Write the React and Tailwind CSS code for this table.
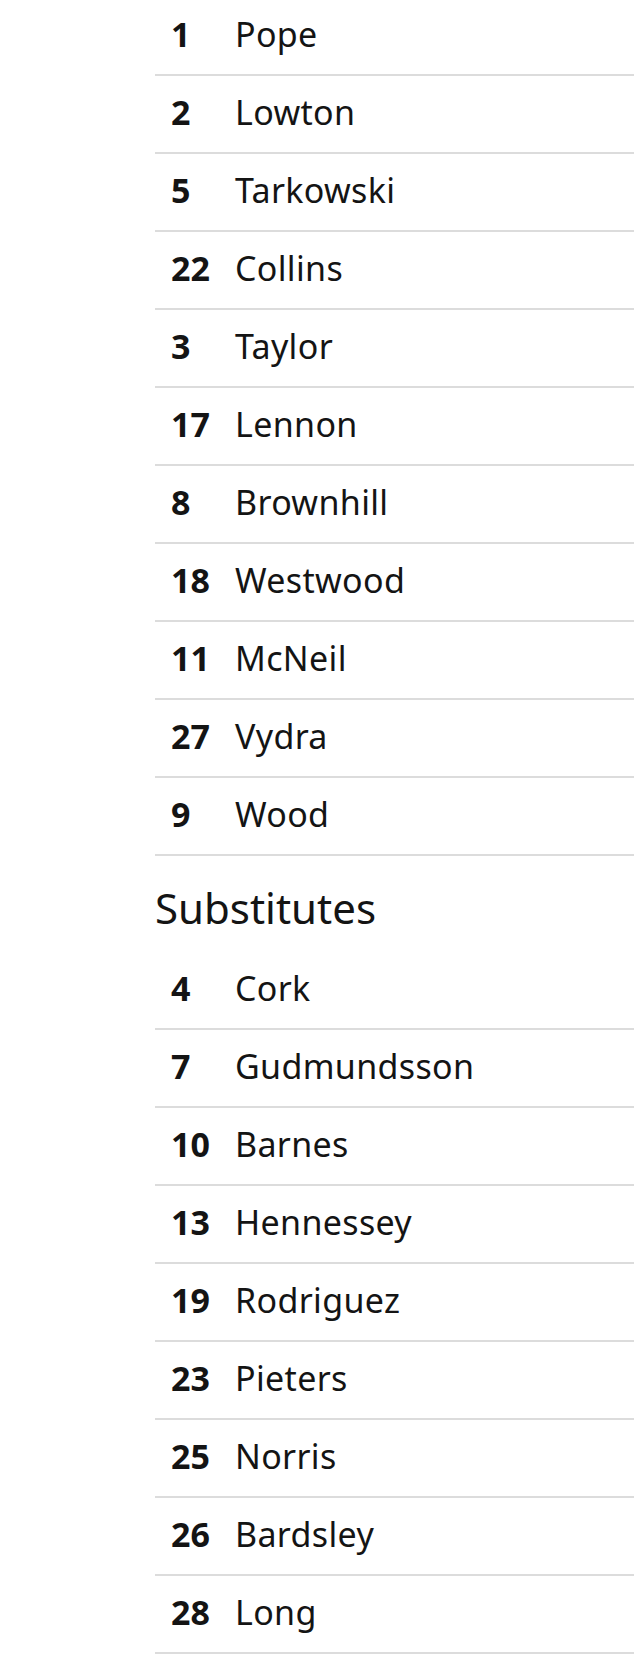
const starters = [
  ["1", "Pope"],
  ["2", "Lowton"],
  ["5", "Tarkowski"],
  ["22", "Collins"],
  ["3", "Taylor"],
  ["17", "Lennon"],
  ["8", "Brownhill"],
  ["18", "Westwood"],
  ["11", "McNeil"],
  ["27", "Vydra"],
  ["9", "Wood"],
];

const subs = [
  ["4", "Cork"],
  ["7", "Gudmundsson"],
  ["10", "Barnes"],
  ["13", "Hennessey"],
  ["19", "Rodriguez"],
  ["23", "Pieters"],
  ["25", "Norris"],
  ["26", "Bardsley"],
  ["28", "Long"],
];

function PlayerRow({ num, name }) {
  return (
    <li className="flex items-center h-[78px] pb-1 border-b-2 border-[#dcdcdc]">
      <span className="w-[80px] pl-4 font-bold">{num}</span>
      <span className="tracking-[0.01em]">{name}</span>
    </li>
  );
}

export default function App() {
  return (
    <div
      className="bg-white text-[#141414] text-[34px] leading-none pl-[155px] -mt-[2px]"
      style={{ fontFamily: '"Noto Sans", "Open Sans", sans-serif' }}
    >
      <ul>
        {starters.map(([n, p]) => (
          <PlayerRow key={n} num={n} name={p} />
        ))}
      </ul>

      {/* Subs */}
      <h3 className="h-[96px] flex items-center pt-2 text-[42px] font-normal">Substitutes</h3>
      <ul>
        {subs.map(([n, p]) => (
          <PlayerRow key={n} num={n} name={p} />
        ))}
      </ul>
    </div>
  );
}
